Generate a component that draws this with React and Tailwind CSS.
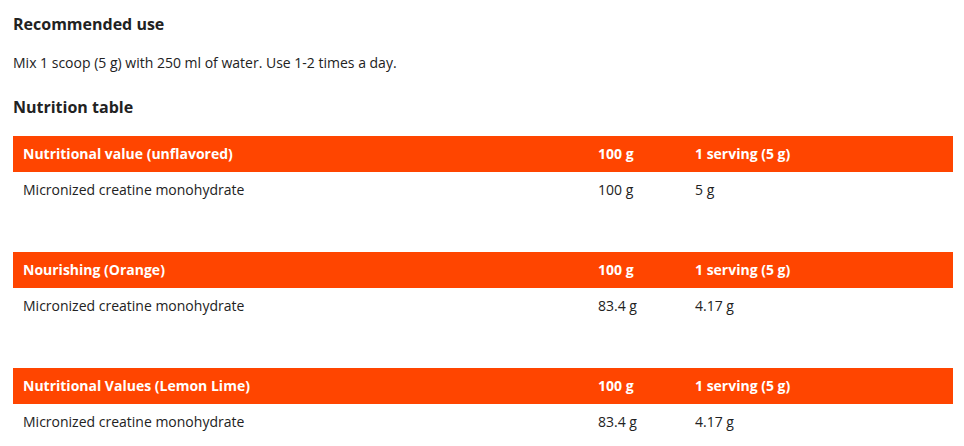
export default function App() {
  const tables = [
    { title: "Nutritional value (unflavored)", a: "100 g", b: "5 g" },
    { title: "Nourishing (Orange)", a: "83.4 g", b: "4.17 g" },
    { title: "Nutritional Values (Lemon Lime)", a: "83.4 g", b: "4.17 g" },
  ];
  return (
    <div className="bg-white w-[964px] h-[446px] overflow-hidden px-[13px] text-[#222] font-['Open_Sans',sans-serif]">
      <h2 className="text-[16px] font-bold leading-[22px] pt-[13px]">Recommended use</h2>
      <p className="text-[14px] leading-[20px] mt-[18px]">Mix 1 scoop (5 g) with 250 ml of water. Use 1-2 times a day.</p>
      <h2 className="text-[16px] font-bold leading-[22px] mt-[23px]">Nutrition table</h2>
      <div className="mt-[18px] flex flex-col gap-[46px] w-[940px]">
        {tables.map((t, i) => (
          <div key={i} className="text-[14px]">
            <div className="grid grid-cols-[575px_97px_1fr] h-[36px] items-center pb-[1px] bg-[#ff4500] text-white font-bold">
              <div className="px-[10px]">{t.title}</div>
              <div className="px-[10px]">100 g</div>
              <div className="px-[10px]">1 serving (5 g)</div>
            </div>
            <div className="grid grid-cols-[575px_97px_1fr] h-[34px] items-center">
              <div className="px-[10px]">Micronized creatine monohydrate</div>
              <div className="px-[10px]">{t.a}</div>
              <div className="px-[10px]">{t.b}</div>
            </div>
          </div>
        ))}
      </div>
    </div>
  );
}
